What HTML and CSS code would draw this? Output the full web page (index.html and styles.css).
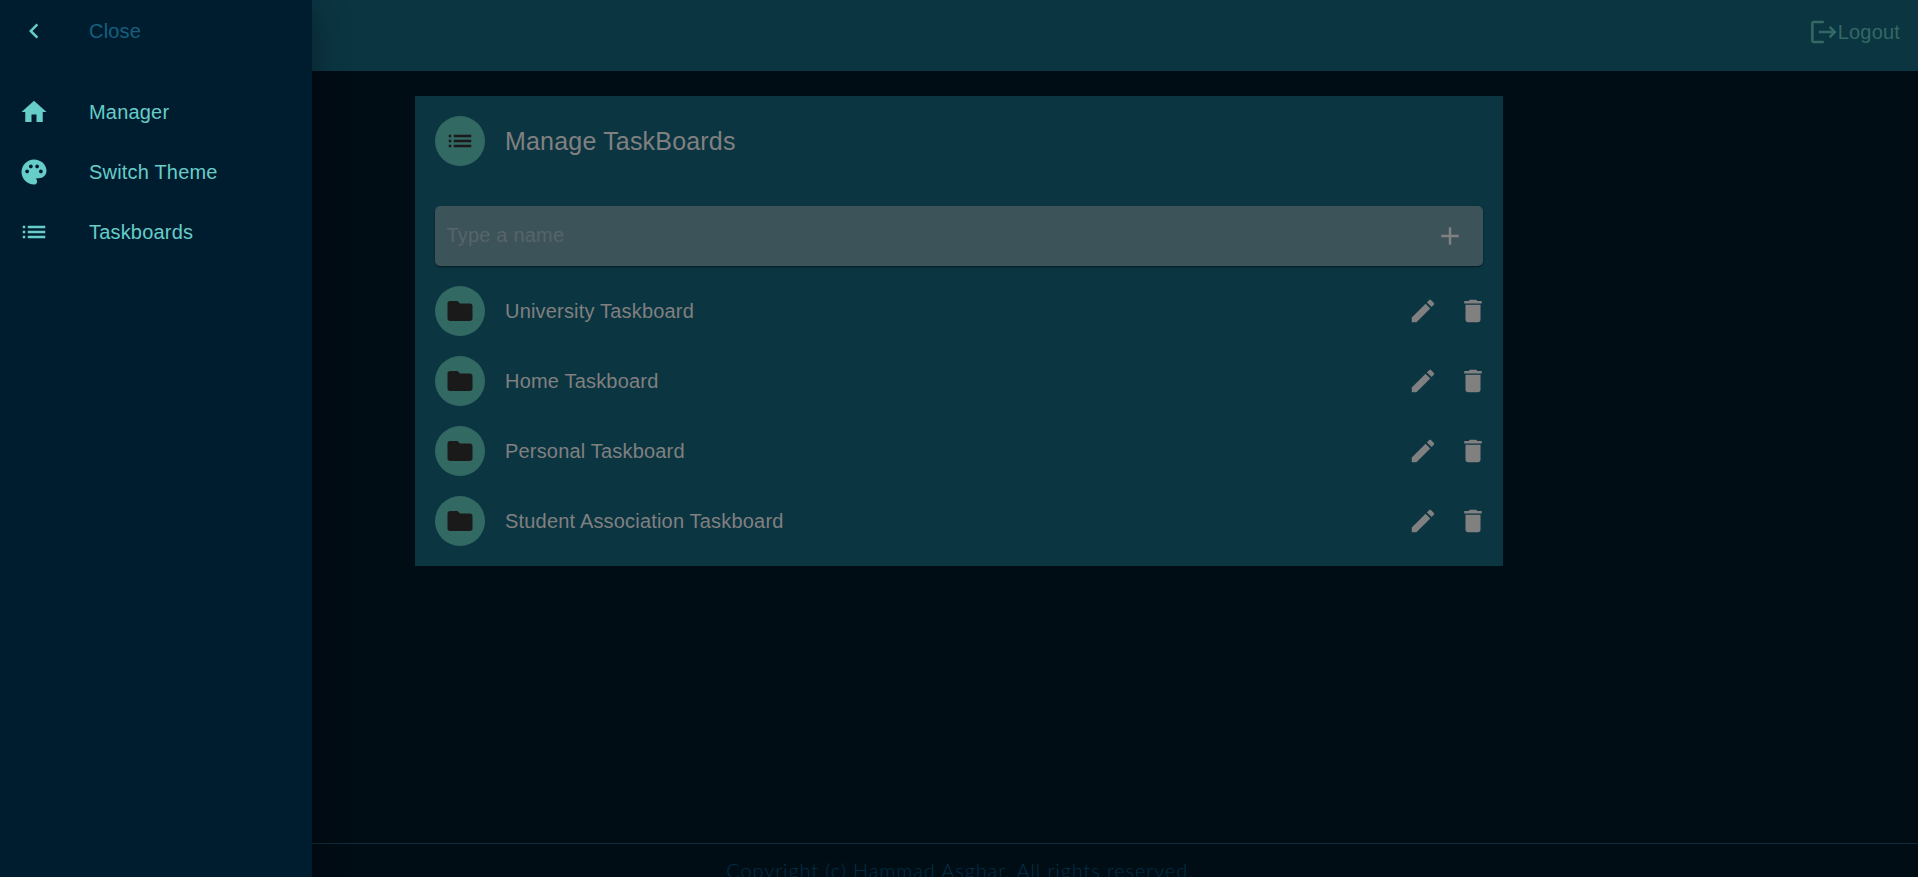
FILE: index.html
```html
<!DOCTYPE html>
<html lang="en">
<head>
<meta charset="utf-8">
<title>Manage TaskBoards</title>
<link rel="stylesheet" href="styles.css">
</head>
<body>
<svg class="defs" width="0" height="0">
  <symbol id="chevron" viewBox="0 0 24 24"><path d="M15.41 7.41L14 6l-6 6 6 6 1.41-1.41L10.83 12z"/></symbol>
  <symbol id="home" viewBox="0 0 24 24"><path d="M10 20v-6h4v6h5v-8h3L12 3 2 12h3v8z"/></symbol>
  <symbol id="palette" viewBox="0 0 24 24"><path d="M12 2C6.49 2 2 6.49 2 12s4.49 10 10 10c1.38 0 2.5-1.12 2.5-2.5 0-.61-.23-1.2-.64-1.67-.08-.1-.13-.21-.13-.33 0-.28.22-.5.5-.5H16c3.31 0 6-2.69 6-6 0-4.96-4.49-9-10-9zm5.5 11c-.83 0-1.5-.67-1.5-1.5s.67-1.5 1.5-1.5 1.5.67 1.5 1.5-.67 1.5-1.5 1.5zm-3-4c-.83 0-1.5-.67-1.5-1.5S13.67 6 14.5 6s1.5.67 1.5 1.5S15.33 9 14.5 9zM5 11.5c0-.83.67-1.5 1.5-1.5S8 10.67 8 11.5 7.33 13 6.5 13 5 12.33 5 11.5zm6-4c0 .83-.67 1.5-1.5 1.5S8 8.33 8 7.5 8.67 6 9.5 6s1.5.67 1.5 1.5z"/></symbol>
  <symbol id="list" viewBox="0 0 24 24"><path d="M3 13h2v-2H3v2zm0 4h2v-2H3v2zm0-8h2V7H3v2zm4 4h14v-2H7v2zm0 4h14v-2H7v2zM7 7v2h14V7H7z"/></symbol>
  <symbol id="logout" viewBox="0 0 24 24"><path d="M18 7.100L16.600 8.510 19.090 11H8.700v2h10.390l-2.490 2.490L18 16.900 22.900 12zM4.500 5h8.100V3H4.500c-1.100 0-2 .9-2 2v14c0 1.100.9 2 2 2h8.100v-2H4.500V5z"/></symbol>
  <symbol id="folder" viewBox="0 0 24 24"><path d="M10 4H4c-1.1 0-1.99.9-1.99 2L2 18c0 1.1.9 2 2 2h16c1.1 0 2-.9 2-2V8c0-1.1-.9-2-2-2h-8l-2-2z"/></symbol>
  <symbol id="plus" viewBox="0 0 24 24"><path d="M19 13h-6v6h-2v-6H5v-2h6V5h2v6h6v2z"/></symbol>
  <symbol id="edit" viewBox="0 0 24 24"><path d="M3 17.25V21h3.75L17.81 9.94l-3.75-3.75L3 17.25zM20.71 7.04c.39-.39.39-1.02 0-1.41l-2.34-2.34c-.39-.39-1.02-.39-1.41 0l-1.83 1.83 3.75 3.75 1.83-1.83z"/></symbol>
  <symbol id="trash" viewBox="0 0 24 24"><path d="M6 19c0 1.1.9 2 2 2h8c1.1 0 2-.9 2-2V7H6v12zM19 4h-3.5l-1-1h-5l-1 1H5v2h14V4z"/></symbol>
</svg>
<div class="app">
  <aside class="drawer">
    <div class="drawer-head"><svg class="icon"><use href="#chevron"/></svg><span>Close</span></div>
    <nav class="nav">
      <a class="nav-item"><svg class="icon"><use href="#home"/></svg><span>Manager</span></a>
      <a class="nav-item"><svg class="icon"><use href="#palette"/></svg><span>Switch Theme</span></a>
      <a class="nav-item"><svg class="icon"><use href="#list"/></svg><span>Taskboards</span></a>
    </nav>
  </aside>
  <div class="page">
    <header class="topbar"><a class="logout"><svg class="icon"><use href="#logout"/></svg><span>Logout</span></a></header>
    <main class="content">
      <section class="card">
        <div class="card-head"><span class="avatar"><svg class="icon"><use href="#list"/></svg></span><h1 class="title">Manage TaskBoards</h1></div>
        <div class="field"><span class="placeholder">Type a name</span><svg class="icon"><use href="#plus"/></svg></div>
        <ul class="boards">
          <li class="board"><span class="avatar"><svg class="icon"><use href="#folder"/></svg></span><span class="name">University Taskboard</span><svg class="icon"><use href="#edit"/></svg><svg class="icon"><use href="#trash"/></svg></li>
          <li class="board"><span class="avatar"><svg class="icon"><use href="#folder"/></svg></span><span class="name">Home Taskboard</span><svg class="icon"><use href="#edit"/></svg><svg class="icon"><use href="#trash"/></svg></li>
          <li class="board"><span class="avatar"><svg class="icon"><use href="#folder"/></svg></span><span class="name">Personal Taskboard</span><svg class="icon"><use href="#edit"/></svg><svg class="icon"><use href="#trash"/></svg></li>
          <li class="board"><span class="avatar"><svg class="icon"><use href="#folder"/></svg></span><span class="name">Student Association Taskboard</span><svg class="icon"><use href="#edit"/></svg><svg class="icon"><use href="#trash"/></svg></li>
        </ul>
      </section>
    </main>
    <footer class="footer"><span class="copyright">Copyright (c) Hammad Asghar. All rights reserved.</span></footer>
  </div>
</div>
</body>
</html>
```
FILE: styles.css
```css
* { box-sizing: border-box; }
body { margin: 0; background: #000d15; font-family: "Liberation Sans", Arial, sans-serif; font-size: 20px; line-height: 30px; letter-spacing: .1875px; color: #808080; }
.defs { display: none; }
.icon { width: 30px; height: 30px; flex: none; fill: currentColor; }
.app { display: flex; height: 877px; overflow: hidden; }
.drawer { position: relative; z-index: 1; width: 312px; flex: none; background: #001d30; color: #66cdc8; box-shadow: 0 10px 12px -6px rgba(0,0,0,.2), 0 20px 30px 2px rgba(0,0,0,.14), 0 7px 37px 6px rgba(0,0,0,.12); }
.drawer-head { display: flex; align-items: flex-start; gap: 40px; height: 72px; padding: 16px 19px; border-bottom: 1px solid #001a2b; }
.drawer-head span { color: #15607e; }
.nav { padding-top: 10px; }
.nav-item { display: flex; align-items: center; gap: 40px; height: 60px; padding: 0 19px; }
.page { flex: 1; display: flex; flex-direction: column; min-width: 0; }
.topbar { display: flex; justify-content: flex-end; height: 71px; padding: 17px 18px 0 0; background: #0c3542; color: #336963; flex: none; }
.logout { display: flex; height: 30px; }
.content { flex: 1; padding: 25px 415px 0 103px; }
.card { height: 470px; padding: 20px; background: #0c3542; }
.card-head { display: flex; align-items: center; gap: 20px; height: 50px; }
.avatar { display: flex; align-items: center; justify-content: center; width: 50px; height: 50px; border-radius: 50%; background: #336963; color: #1a1a1a; flex: none; }
.title { margin: 0; font-size: 25px; font-weight: 400; line-height: 40px; }
.field { display: flex; align-items: center; justify-content: space-between; height: 60px; margin-top: 40px; padding: 0 18px 0 11.5px; border-radius: 5px; background: #3d535a; box-shadow: 0 1px 2px rgba(0,0,0,.5); }
.placeholder { color: #576469; line-height: 28px; padding-bottom: 2px; }
.boards { display: flex; flex-direction: column; gap: 20px; margin: 20px 0 0; padding: 0; list-style: none; }
.board { display: flex; align-items: center; gap: 20px; height: 50px; margin-right: -5px; }
.name { flex: 1; }
.footer { flex: none; height: 34px; padding-top: 11px; border-top: 1px solid #0d2d38; text-align: center; }
.copyright { margin-left: -310px; font-family: Lato, sans-serif; font-weight: 300; letter-spacing: .88px; color: #02304a; }
```
